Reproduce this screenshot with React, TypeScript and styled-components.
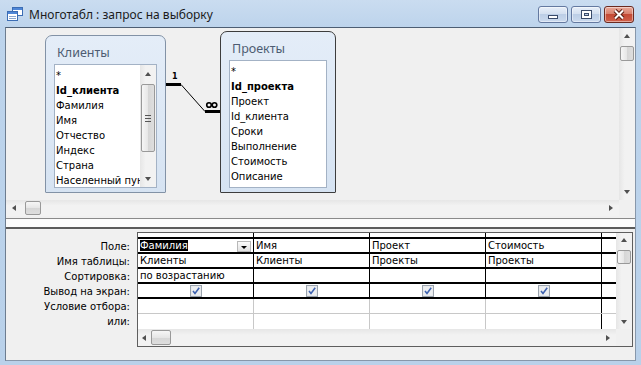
import styled, { createGlobalStyle } from "styled-components";

const UI = `"DejaVu Sans", "Liberation Sans", sans-serif`;

const GlobalStyle = createGlobalStyle`
  html, body { margin: 0; padding: 0; }
  body { background: #b9d1ea; }
  * { box-sizing: border-box; }
`;

const Window = styled.div`
  width: 641px;
  height: 365px;
  display: flex;
  flex-direction: column;
  background: linear-gradient(180deg, #cadcf0 0px, #bdd4ec 27px, #b9d1ea 100%);
  font-family: ${UI};
  font-size: 10px;
  color: #000;
  overflow: hidden;
`;

const TitleBar = styled.div`
  height: 27px;
  flex-shrink: 0;
  display: flex;
  align-items: flex-start;
  padding: 0 7px;
`;

const AppIcon = styled.svg`
  margin-top: 7px;
  flex-shrink: 0;
`;

const Title = styled.div`
  flex: 1;
  margin: 6px 0 0 6px;
  font-family: "Noto Sans", sans-serif;
  font-size: 12px;
  line-height: 17px;
  color: #1b1b1b;
`;

const Controls = styled.div`
  display: flex;
  gap: 3px;
  margin-top: 6px;
`;

const CaptionButton = styled.div<{ $close?: boolean }>`
  width: 30px;
  height: 17px;
  border-radius: 3px;
  display: flex;
  align-items: center;
  justify-content: center;
  border: 1px solid ${(p) => (p.$close ? "#6b2a20" : "#6479a0")};
  background: ${(p) =>
    p.$close
      ? "linear-gradient(180deg, #e9a99a 0%, #d8826f 45%, #c44a35 50%, #d0604a 100%)"
      : "linear-gradient(180deg, #e8eff9 0%, #d4e0f0 45%, #bccee6 50%, #cbdaee 100%)"};
  box-shadow: inset 0 0 0 1px rgba(255, 255, 255, 0.45);
`;

const MinGlyph = styled.span`
  width: 10px;
  height: 4px;
  margin-top: 4px;
  background: #fff;
  border: 1px solid #3a4b6a;
`;

const MaxGlyph = styled.span`
  width: 11px;
  height: 9px;
  border: 1px solid #3a4b6a;
  box-shadow: inset 0 0 0 2px #fff, inset 0 0 0 3px #3a4b6a;
  background: transparent;
`;

const Client = styled.div`
  flex: 1;
  min-height: 0;
  margin: 0 5px 4px 5px;
  border: 1px solid #8797aa;
  border-top-color: #4d5e73;
  border-left-color: #6d7d90;
  background: #f0f0f0;
  display: flex;
  flex-direction: column;
`;

const DiagramRow = styled.div`
  height: 172px;
  flex-shrink: 0;
  display: flex;
`;

const Canvas = styled.div`
  flex: 1;
  position: relative;
  overflow: hidden;
  background: #f0f0f0;
`;

const Relation = styled.svg`
  position: absolute;
  left: 0;
  top: 0;
  pointer-events: none;
`;

const TableBox = styled.div<{ $x: number; $y: number; $w: number; $h: number; $active?: boolean }>`
  position: absolute;
  left: ${(p) => p.$x}px;
  top: ${(p) => p.$y}px;
  width: ${(p) => p.$w}px;
  height: ${(p) => p.$h}px;
  display: flex;
  flex-direction: column;
  padding: 0 8px 4px 8px;
  border: 1px solid ${(p) => (p.$active ? "#3d3d3d" : "#8292a6")};
  border-radius: 7px 7px 1px 1px;
  background: linear-gradient(180deg, #e4edf8 0%, #d6e3f2 100%);
`;

const TableName = styled.div`
  height: 28px;
  flex-shrink: 0;
  padding: 9px 0 0 3px;
  font-family: "Noto Sans", sans-serif;
  font-size: 12.5px;
  line-height: 16px;
  color: #4d5c72;
`;

const FieldList = styled.div`
  flex: 1;
  min-height: 0;
  display: flex;
  background: #fff;
  border: 1px solid #a3b2c5;
`;

const Fields = styled.div<{ $top: number }>`
  flex: 1;
  min-width: 0;
  overflow: hidden;
  padding: ${(p) => p.$top}px 0 0 1px;
`;

const Field = styled.div<{ $key?: boolean }>`
  height: 15px;
  line-height: 15px;
  white-space: nowrap;
  overflow: hidden;
  font-weight: ${(p) => (p.$key ? 700 : 400)};
`;

const VBar = styled.div<{ $w?: number }>`
  width: ${(p) => p.$w ?? 16}px;
  flex-shrink: 0;
  display: flex;
  flex-direction: column;
  background: linear-gradient(90deg, #e6e6e6 0%, #f2f2f2 35%, #f2f2f2 100%);
`;

const HBar = styled.div<{ $h?: number }>`
  height: ${(p) => p.$h ?? 16}px;
  flex-shrink: 0;
  display: flex;
  background: linear-gradient(180deg, #e6e6e6 0%, #f2f2f2 35%, #f2f2f2 100%);
`;

const Corner = styled.div<{ $h?: number }>`
  width: 16px;
  height: ${(p) => (p.$h ? `${p.$h}px` : "auto")};
  flex-shrink: 0;
  background: #f0f0f0;
`;

type Dir = "up" | "down" | "left" | "right";

const arrowShape: Record<Dir, string> = {
  up: "border-left: 3px solid transparent; border-right: 3px solid transparent; border-bottom: 4px solid #505050;",
  down: "border-left: 3px solid transparent; border-right: 3px solid transparent; border-top: 4px solid #505050;",
  left: "border-top: 3px solid transparent; border-bottom: 3px solid transparent; border-right: 4px solid #505050;",
  right: "border-top: 3px solid transparent; border-bottom: 3px solid transparent; border-left: 4px solid #505050;",
};

const Arrow = styled.div<{ $dir: Dir; $size?: number }>`
  flex: 0 0 ${(p) => p.$size ?? 16}px;
  display: flex;
  align-items: center;
  justify-content: center;
  &::after {
    content: "";
    width: 0;
    height: 0;
    ${(p) => arrowShape[p.$dir]}
  }
`;

const Thumb = styled.div<{ $vertical?: boolean; $len: number; $offset: number }>`
  flex: 0 0 ${(p) => p.$len}px;
  margin: ${(p) => (p.$vertical ? `${p.$offset}px 1px 0` : `1px 0 1px ${p.$offset}px`)};
  border: 1px solid #999;
  border-radius: 2px;
  background: linear-gradient(
    ${(p) => (p.$vertical ? "90deg" : "180deg")},
    #f6f6f6 0%,
    #e6e6e6 50%,
    #d6d6d6 51%,
    #dedede 100%
  );
  display: flex;
  align-items: center;
  justify-content: center;
`;

const Grip = styled.span`
  width: 6px;
  height: 1px;
  background: #555;
  box-shadow: 0 -3px 0 #555, 0 3px 0 #555;
`;

const Spacer = styled.div`
  flex: 1;
`;

const Splitter = styled.div`
  height: 10px;
  flex-shrink: 0;
  padding-top: 2px;
  &::before {
    content: "";
    display: block;
    height: 8px;
    border-top: 1px solid #8a8a8a;
    border-bottom: 2px solid #5a5a5a;
    background: #fbfbfb;
  }
`;

const DesignPane = styled.div`
  flex: 1;
  min-height: 0;
  display: flex;
  gap: 7px;
  padding-top: 6px;
`;

const Labels = styled.div`
  width: 124px;
  flex-shrink: 0;
  padding-top: 7px;
  display: flex;
  flex-direction: column;
  align-items: flex-end;
`;

const Label = styled.div`
  height: 15px;
  line-height: 15px;
  white-space: nowrap;
`;

const Grid = styled.div`
  width: 496px;
  height: 115px;
  display: flex;
  border: 1px solid #5e5e5e;
  background: #fff;
`;

const GridMain = styled.div`
  flex: 1;
  min-width: 0;
  display: flex;
  flex-direction: column;
`;

const GridRow = styled.div<{ $h: number; $line?: string; $weight?: number }>`
  height: ${(p) => p.$h}px;
  flex-shrink: 0;
  display: flex;
  border-bottom: ${(p) => (p.$line ? `${p.$weight ?? 1}px solid ${p.$line}` : "none")};
`;

const GridCell = styled.div<{ $line: string; $center?: boolean }>`
  width: 116px;
  flex-shrink: 0;
  border-right: 1px solid ${(p) => p.$line};
  display: flex;
  align-items: center;
  justify-content: ${(p) => (p.$center ? "center" : "space-between")};
  padding-left: ${(p) => (p.$center ? 0 : 2)}px;
  padding-right: ${(p) => (p.$center ? 0 : 2)}px;
  white-space: nowrap;
  overflow: hidden;
  line-height: 13px;
`;

const Selected = styled.span`
  background: #000;
  color: #fff;
  line-height: 11px;
`;

const DropButton = styled.span`
  width: 14px;
  height: 11px;
  align-self: flex-end;
  border: 1px solid #b8b8b8;
  background: linear-gradient(180deg, #fbfbfb, #e1e1e1);
  display: flex;
  align-items: flex-end;
  justify-content: center;
  padding-bottom: 2px;
  &::after {
    content: "";
    width: 0;
    height: 0;
    border-left: 3px solid transparent;
    border-right: 3px solid transparent;
    border-top: 3px solid #000;
  }
`;

const CheckMark = () => (
  <svg width="12" height="12" viewBox="0 0 12 12">
    <rect x="0.5" y="0.5" width="11" height="11" fill="#e3e5e8" stroke="#9aa3ad" />
    <rect x="1.5" y="1.5" width="9" height="9" fill="#eceef0" />
    <path d="M3 6 L5 8.5 L9.2 2.8" stroke="#3f63b0" strokeWidth="1.6" fill="none" />
  </svg>
);

type Col = { field: string; table: string; sort: string };

const columns: Col[] = [
  { field: "Фамилия", table: "Клиенты", sort: "по возрастанию" },
  { field: "Имя", table: "Клиенты", sort: "" },
  { field: "Проект", table: "Проекты", sort: "" },
  { field: "Стоимость", table: "Проекты", sort: "" },
];

const labels = ["Поле:", "Имя таблицы:", "Сортировка:", "Вывод на экран:", "Условие отбора:", "или:"];

const clientFields = ["*", "Id_клиента", "Фамилия", "Имя", "Отчество", "Индекс", "Страна", "Населенный пун"];
const projectFields = ["*", "Id_проекта", "Проект", "Id_клиента", "Сроки", "Выполнение", "Стоимость", "Описание"];

const DARK = "#000";
const LIGHT = "#c8c8c8";

function QbeRow({ kind }: { kind: number }) {
  const lower = kind >= 5;
  return (
    <GridRow $h={15} $line={kind === 6 ? undefined : lower ? LIGHT : DARK} $weight={lower ? 1 : 2}>
      {columns.map((c, i) => {
        const line = !lower || i === 3 ? DARK : LIGHT;
        if (kind === 1)
          return (
            <GridCell key={i} $line={line}>
              {i === 0 ? <Selected>{c.field}</Selected> : <span>{c.field}</span>}
              {i === 0 && <DropButton />}
            </GridCell>
          );
        if (kind === 2)
          return (
            <GridCell key={i} $line={line}>
              <span>{c.table}</span>
            </GridCell>
          );
        if (kind === 3)
          return (
            <GridCell key={i} $line={line}>
              <span>{c.sort}</span>
            </GridCell>
          );
        if (kind === 4)
          return (
            <GridCell key={i} $line={line} $center>
              <CheckMark />
            </GridCell>
          );
        return <GridCell key={i} $line={line} />;
      })}
      <Spacer />
    </GridRow>
  );
}

export default function App() {
  return (
    <>
      <GlobalStyle />
      <Window>
        <TitleBar>
          <AppIcon width="16" height="14" viewBox="0 0 16 14">
            <rect x="5.5" y="0.5" width="10" height="8" fill="#fff" stroke="#3c6db4" />
            <rect x="6" y="1" width="9" height="2" fill="#4f86d6" />
            <rect x="0.5" y="4.5" width="10" height="9" fill="#fff" stroke="#3c6db4" />
            <rect x="1" y="5" width="9" height="2" fill="#4f86d6" />
            <path d="M2 9.5 H9 M2 11.5 H9" stroke="#8aa6cf" />
          </AppIcon>
          <Title>Многотабл : запрос на выборку</Title>
          <Controls>
            <CaptionButton>
              <MinGlyph />
            </CaptionButton>
            <CaptionButton>
              <MaxGlyph />
            </CaptionButton>
            <CaptionButton $close>
              <svg width="14" height="11" viewBox="0 0 14 11">
                <path d="M3 1.5 L11 9.5 M11 1.5 L3 9.5" stroke="#5a1e14" strokeWidth="4" />
                <path d="M3 1.5 L11 9.5 M11 1.5 L3 9.5" stroke="#fff" strokeWidth="2" />
              </svg>
            </CaptionButton>
          </Controls>
        </TitleBar>

        <Client>
          <DiagramRow>
            <Canvas>
              <TableBox $x={39} $y={7} $w={121} $h={158}>
                <TableName>Клиенты</TableName>
                <FieldList>
                  <Fields $top={3}>
                    {clientFields.map((f, i) => (
                      <Field key={f} $key={i === 1}>
                        {f}
                      </Field>
                    ))}
                  </Fields>
                  <VBar>
                    <Arrow $dir="up" $size={17} />
                    <Thumb $vertical $len={68} $offset={2}>
                      <Grip />
                    </Thumb>
                    <Spacer />
                    <Arrow $dir="down" $size={17} />
                  </VBar>
                </FieldList>
              </TableBox>

              <TableBox $x={214} $y={3} $w={116} $h={162} $active>
                <TableName>Проекты</TableName>
                <FieldList>
                  <Fields $top={3}>
                    {projectFields.map((f, i) => (
                      <Field key={f} $key={i === 1}>
                        {f}
                      </Field>
                    ))}
                  </Fields>
                </FieldList>
              </TableBox>

              <Relation width="612" height="172">
                <path d="M160 56.5 H175" stroke="#000" strokeWidth="3" />
                <path d="M175 56.5 L199 83.5" stroke="#000" strokeWidth="1" />
                <path d="M199 83.5 H214" stroke="#000" strokeWidth="3" />
                <text x="166" y="51" fontFamily="DejaVu Sans" fontWeight="700" fontSize="8">
                  1
                </text>
                <circle cx="203" cy="77" r="2.3" fill="none" stroke="#000" strokeWidth="1.6" />
                <circle cx="208.5" cy="77" r="2.3" fill="none" stroke="#000" strokeWidth="1.6" />
              </Relation>
            </Canvas>
            <VBar>
              <Arrow $dir="up" />
              <Thumb $vertical $len={15} $offset={2} />
              <Spacer />
              <Arrow $dir="down" />
            </VBar>
          </DiagramRow>
          <HBar>
            <Arrow $dir="left" />
            <Thumb $len={16} $offset={3} />
            <Spacer />
            <Arrow $dir="right" />
            <Corner />
          </HBar>

          <Splitter />

          <DesignPane>
            <Labels>
              {labels.map((l) => (
                <Label key={l}>{l}</Label>
              ))}
            </Labels>
            <Grid>
              <GridMain>
                <GridRow $h={6} $line={DARK} $weight={2}>
                  {columns.map((c) => (
                    <GridCell key={c.field} $line={DARK} />
                  ))}
                  <Spacer />
                </GridRow>
                {[1, 2, 3, 4, 5, 6].map((k) => (
                  <QbeRow key={k} kind={k} />
                ))}
                <HBar $h={17}>
                  <Arrow $dir="left" $size={12} />
                  <Thumb $len={20} $offset={1} />
                  <Spacer />
                  <Arrow $dir="right" $size={17} />
                </HBar>
              </GridMain>
              <VBar>
                <Arrow $dir="up" $size={14} />
                <Thumb $vertical $len={14} $offset={3} />
                <Spacer />
                <Arrow $dir="down" $size={15} />
                <Corner $h={17} />
              </VBar>
            </Grid>
          </DesignPane>
        </Client>
      </Window>
    </>
  );
}
